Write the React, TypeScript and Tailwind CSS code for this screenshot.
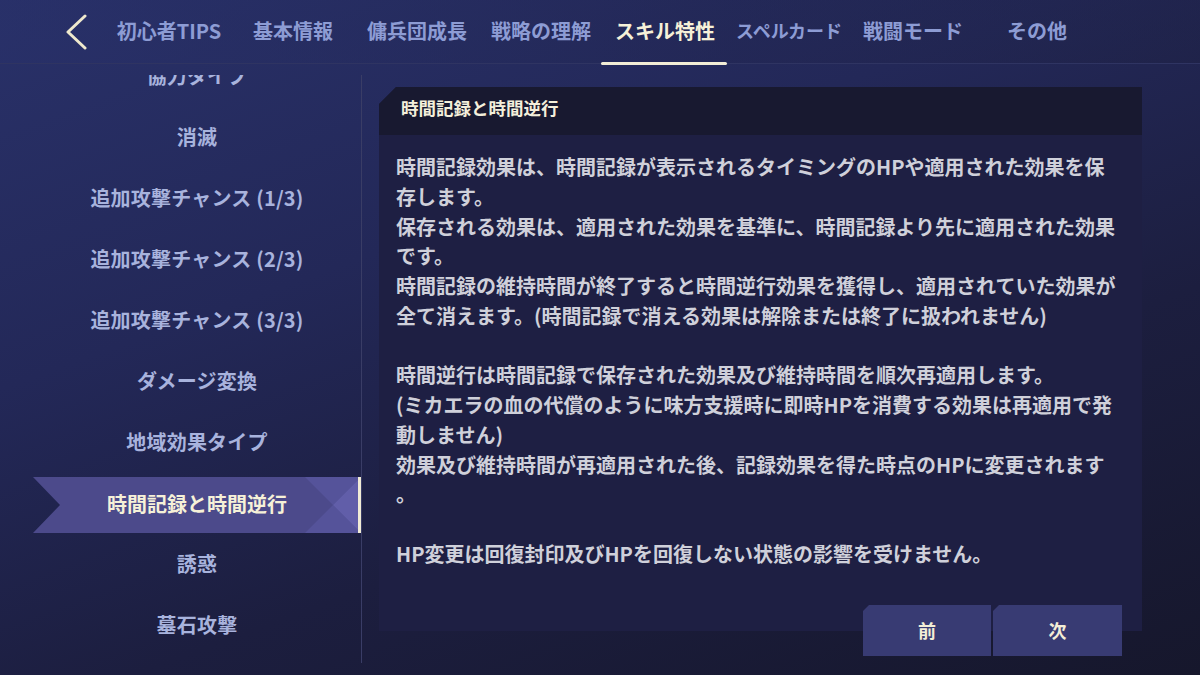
import React from "react";

const tabs = [
  { label: "初心者TIPS" },
  { label: "基本情報" },
  { label: "傭兵団成長" },
  { label: "戦略の理解" },
  { label: "スキル特性", active: true },
  { label: "スペルカード", small: true },
  { label: "戦闘モード" },
  { label: "その他" },
];

const sideItems = [
  "協力タイプ",
  "消滅",
  "追加攻撃チャンス (1/3)",
  "追加攻撃チャンス (2/3)",
  "追加攻撃チャンス (3/3)",
  "ダメージ変換",
  "地域効果タイプ",
  "時間記録と時間逆行",
  "誘惑",
  "墓石攻撃",
];

const bodyLines = [
  "時間記録効果は、時間記録が表示されるタイミングのHPや適用された効果を保",
  "存します。",
  "保存される効果は、適用された効果を基準に、時間記録より先に適用された効果",
  "です。",
  "時間記録の維持時間が終了すると時間逆行効果を獲得し、適用されていた効果が",
  "全て消えます。(時間記録で消える効果は解除または終了に扱われません)",
  "",
  "時間逆行は時間記録で保存された効果及び維持時間を順次再適用します。",
  "(ミカエラの血の代償のように味方支援時に即時HPを消費する効果は再適用で発",
  "動しません)",
  "効果及び維持時間が再適用された後、記録効果を得た時点のHPに変更されます",
  "。",
  "",
  "HP変更は回復封印及びHPを回復しない状態の影響を受けません。",
];

function ActiveBg() {
  return (
    <svg
      className="absolute inset-0"
      width="328"
      height="56"
      viewBox="0 0 328 56"
      preserveAspectRatio="none"
    >
      <polygon points="0,0 328,0 328,56 0,56 27,28" fill="#4c4a8b" />
      <polygon points="272,0 328,0 300,28" fill="#55539a" />
      <polygon points="272,56 328,56 300,28" fill="#55539a" />
      <polygon points="328,0 328,56 300,28" fill="#615ea9" />
      <rect x="325" y="0" width="3" height="56" fill="#f1ecd6" />
    </svg>
  );
}

export default function App() {
  return (
    <div className="w-[1200px] h-[675px] overflow-hidden relative flex flex-col font-['Noto_Sans_CJK_JP',sans-serif] bg-[linear-gradient(160deg,#293169_0%,#232858_35%,#1c1e3f_65%,#16172c_100%)]">
      {/* Top nav */}
      <div className="h-[64px] shrink-0 flex items-stretch border-b border-[#2f3462] bg-[linear-gradient(90deg,rgba(40,48,105,0.6)_0%,rgba(33,37,80,0.4)_60%,rgba(28,30,60,0.3)_100%)]">
        <div className="w-[107px] flex items-center pl-[66px]">
          <svg width="22" height="36" viewBox="0 0 22 36">
            <polyline
              points="19,2 2,18 19,34"
              fill="none"
              stroke="#efe9cd"
              strokeWidth="3"
              strokeLinecap="round"
              strokeLinejoin="round"
            />
          </svg>
        </div>
        {tabs.map((t) => (
          <div
            key={t.label}
            className="w-[124px] relative flex items-center justify-center"
          >
            <span
              className={
                "font-bold whitespace-nowrap pb-[2px] " +
                (t.active
                  ? "text-[20px] text-[#f6f1d8]"
                  : t.small
                  ? "text-[18px] text-[#8d9cd4]"
                  : "text-[20px] text-[#8d9cd4]")
              }
            >
              {t.label}
            </span>
            {t.active && (
              <div className="absolute left-[-2px] right-[0px] bottom-[-2px] h-[3px] bg-[#f2edd6] rounded-full" />
            )}
          </div>
        ))}
      </div>

      {/* Main */}
      <div className="flex flex-1 items-start">
        {/* Sidebar */}
        <div className="mt-[11px] w-[362px] h-[588px] shrink-0 pl-[33px] border-r border-[#3a3d66] overflow-hidden">
          <div className="-mt-[30px] flex flex-col">
            {sideItems.map((s, i) => {
              const active = i === 7;
              return (
                <div
                  key={s}
                  className="h-[61.1px] shrink-0 flex items-center justify-center"
                >
                  {active ? (
                    <div className="relative w-full h-[56px] mt-[3px] flex items-center justify-center">
                      <ActiveBg />
                      <span className="relative text-[20px] font-bold text-[#f6f1d8] whitespace-nowrap pb-[2px]">
                        {s}
                      </span>
                    </div>
                  ) : (
                    <span className="text-[20px] font-bold text-[#a8b3dd] whitespace-nowrap tracking-[0.2px]">
                      {s}
                    </span>
                  )}
                </div>
              );
            })}
          </div>
        </div>

        {/* Content panel */}
        <div className="relative ml-[17px] mt-[23px] w-[763px] h-[544px]">
          <div className="w-full h-full flex flex-col bg-[#1e1f43] [clip-path:polygon(17px_0,100%_0,100%_100%,0_100%,0_17px)]">
            <div className="h-[48px] shrink-0 bg-[#181930] flex items-center pl-[22px] pb-[5px]">
              <span className="text-[17.5px] font-bold text-[#f4efdb]">
                時間記録と時間逆行
              </span>
            </div>
            <div className="pl-[17px] pt-[17px] flex flex-col">
              {bodyLines.map((l, i) => (
                <div
                  key={i}
                  className="h-[29.75px] leading-[29.75px] text-[20px] font-bold text-[#cfd0da] whitespace-nowrap"
                >
                  {l || "\u00a0"}
                </div>
              ))}
            </div>
          </div>

          {/* Buttons */}
          <div className="absolute right-[20px] bottom-[-25px] flex gap-[2px]">
            <div className="w-[128px] h-[51px] bg-[#383b73] flex items-center justify-center [clip-path:polygon(6px_0,100%_0,100%_100%,0_100%,0_6px)]">
              <span className="text-[18px] font-bold text-[#f3eed7]">前</span>
            </div>
            <div className="w-[129px] h-[51px] bg-[#383b73] flex items-center justify-center [clip-path:polygon(6px_0,100%_0,100%_100%,0_100%,0_6px)]">
              <span className="text-[18px] font-bold text-[#f3eed7]">次</span>
            </div>
          </div>
        </div>
      </div>
    </div>
  );
}
